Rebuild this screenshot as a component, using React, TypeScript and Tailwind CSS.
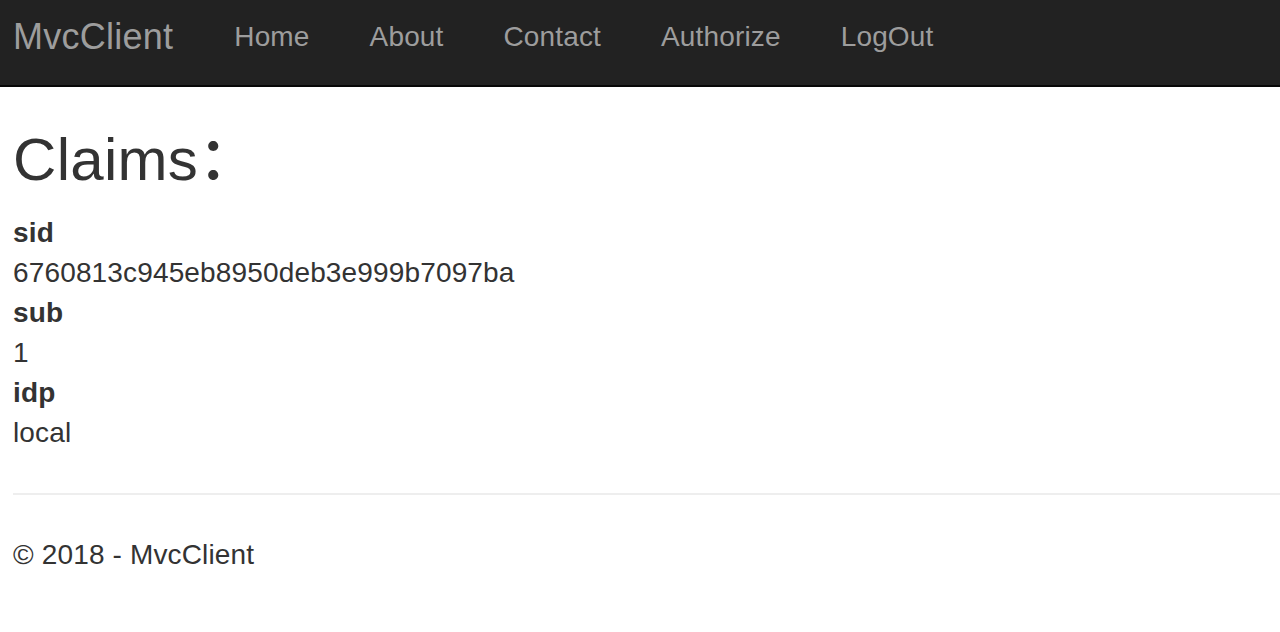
export default function App() {
  const navLinks = ["Home", "About", "Contact", "Authorize", "LogOut"];

  const claims = [
    { type: "sid", value: "6760813c945eb8950deb3e999b7097ba" },
    { type: "sub", value: "1" },
    { type: "idp", value: "local" },
  ];

  return (
    <div
      className="min-h-screen bg-white text-[#333] text-[28px] leading-[40px] tracking-[0.15px]"
      style={{ fontFamily: '"Liberation Sans", "Noto Sans CJK SC", Arial, sans-serif' }}
    >
      {/* Navbar */}
      <nav className="h-[87px] bg-[#222] border-b-2 border-[#080808] flex items-start pt-[17px] pl-[13px]">
        <a href="#" className="text-[36px] leading-[40px] tracking-[0.25px] text-[#9d9d9d] pr-[31px]">
          MvcClient
        </a>
        <ul className="flex">
          {navLinks.map((link) => (
            <li key={link}>
              <a href="#" className="block px-[30px] text-[28px] leading-[40px] text-[#9d9d9d]">
                {link}
              </a>
            </li>
          ))}
        </ul>
      </nav>

      {/* Body */}
      <div className="pl-[13px]">
        <h2 className="mt-[40px] mb-[20px] text-[60px] leading-[66px] font-medium tracking-[0.3px]">
          Claims：
        </h2>

        <dl className="mb-[40px]">
          {claims.map((claim) => (
            <div key={claim.type}>
              <dt className="font-bold">{claim.type}</dt>
              <dd>{claim.value}</dd>
            </div>
          ))}
        </dl>

        <hr className="border-t-2 border-[#eee]" />

        <footer className="mt-[40px]">
          <p>© 2018 - MvcClient</p>
        </footer>
      </div>
    </div>
  );
}
